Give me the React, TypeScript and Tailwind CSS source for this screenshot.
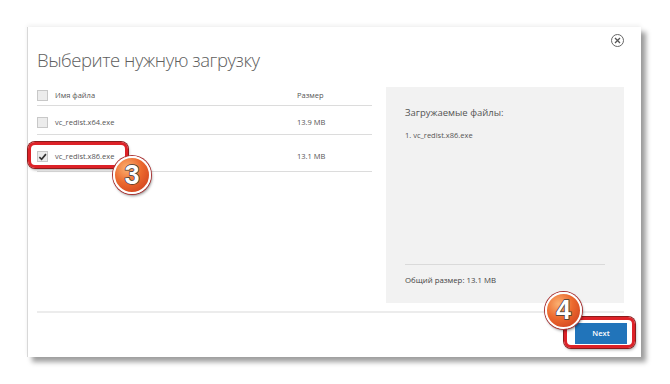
import React from "react";

function Box({ checked }: { checked?: boolean }) {
  return (
    <div className="w-[11px] h-[11px] border border-[#c8c8c8] bg-[#ececec] flex items-center justify-center shrink-0">
      {checked && (
        <svg width="10" height="10" viewBox="0 0 10 10">
          <path d="M1.5 5.2 L4 7.6 L8.8 1.8" fill="none" stroke="#333" strokeWidth="1.8" />
        </svg>
      )}
    </div>
  );
}

function Badge({ n, cls }: { n: string; cls: string }) {
  return (
    <div
      className={`absolute rounded-full border-2 border-white flex items-center justify-center shadow-[0_0_0_1px_#a33,1px_2px_3px_rgba(0,0,0,0.45)] bg-[radial-gradient(circle_at_35%_30%,#fbb172_0%,#ec6a2e_45%,#c9361a_100%)] ${cls}`}
    >
      <span className="font-['Liberation_Sans'] font-bold text-[27px] leading-none text-white [-webkit-text-stroke:1.5px_#3a3a3a] [paint-order:stroke_fill]">
        {n}
      </span>
    </div>
  );
}

export default function App() {
  return (
    <div className="w-[670px] h-[384px] bg-white relative overflow-hidden font-['Open_Sans',sans-serif] text-[#444]">
      <div className="pt-[27px] pl-[27px]">
        <div className="relative w-[614px] h-[330px] bg-white border-l border-[#d8d8d8] shadow-[0_-2px_4px_rgba(0,0,0,0.06),5px_5px_5px_rgba(0,0,0,0.38)] flex flex-col">
          <div className="absolute top-[7px] right-[17px] w-[13px] h-[13px] rounded-full border-[1.5px] border-[#666] flex items-center justify-center">
            <svg width="7" height="7" viewBox="0 0 7 7">
              <path d="M1 1 L6 6 M6 1 L1 6" stroke="#555" strokeWidth="1.3" />
            </svg>
          </div>
          <div className="pt-[20px] pl-[9px] text-[18.5px] leading-[26px] font-light text-[#606060] tracking-[-0.45px]">
            Выберите нужную загрузку
          </div>
          <div className="mt-[14px] flex pl-[9px] pr-[17px]">
            <div className="w-[335px] text-[7.5px] text-[#555]">
              <div className="h-[19px] flex items-center border-b border-[#dcdcdc] pb-[1px]">
                <Box />
                <span className="ml-[7px] flex-1">Имя файла</span>
                <span className="w-[75px]">Размер</span>
              </div>
              <div className="h-[29px] flex items-center border-b border-[#dcdcdc] pt-[5px]">
                <Box />
                <span className="ml-[7px] flex-1">vc_redist.x64.exe</span>
                <span className="w-[75px]">13.9 MB</span>
              </div>
              <div className="h-[37px] flex items-center border-b border-[#dcdcdc] pt-[7px]">
                <Box checked />
                <span className="ml-[7px] flex-1">vc_redist.x86.exe</span>
                <span className="w-[75px]">13.1 MB</span>
              </div>
            </div>
            <div className="ml-[14px] w-[238px] h-[216px] bg-[#f2f2f2] flex flex-col pl-[19px] pr-[19px]">
              <div className="mt-[19px] text-[9.5px] text-[#555]">Загружаемые файлы:</div>
              <div className="mt-[10px] text-[7.5px] text-[#555]">1. vc_redist.x86.exe</div>
              <div className="mt-auto border-t border-[#dadada] pt-[10px] pb-[16px] text-[7.8px] text-[#444]">
                Общий размер: 13.1 MB
              </div>
            </div>
          </div>
          <div className="mt-[8px] ml-[9px] mr-[17px] border-t-2 border-[#ececec]" />
          <div className="flex justify-end pr-[14px] pt-[10px]">
            <div className="w-[52px] h-[21px] bg-[#2174ba] text-white text-[7.5px] font-semibold flex items-center justify-center">
              Next
            </div>
          </div>
        </div>
      </div>

      <div className="absolute left-[28px] top-[142px] w-[100px] h-[26px] rounded-[7px] border-[3px] border-[#dd2228] shadow-[0_0_0_1px_#8c1b1b,inset_0_0_0_1px_#fff,1px_2px_3px_rgba(0,0,0,0.35)]" />
      <div className="absolute left-[564px] top-[317px] w-[71px] h-[31px] rounded-[7px] border-[3px] border-[#dd2228] shadow-[0_0_0_1px_#8c1b1b,inset_0_0_0_1px_#fff,1px_2px_3px_rgba(0,0,0,0.35)]" />

      <Badge n="3" cls="left-[113px] top-[156px] w-[38px] h-[38px]" />
      <Badge n="4" cls="left-[545px] top-[292px] w-[37px] h-[37px]" />
    </div>
  );
}
